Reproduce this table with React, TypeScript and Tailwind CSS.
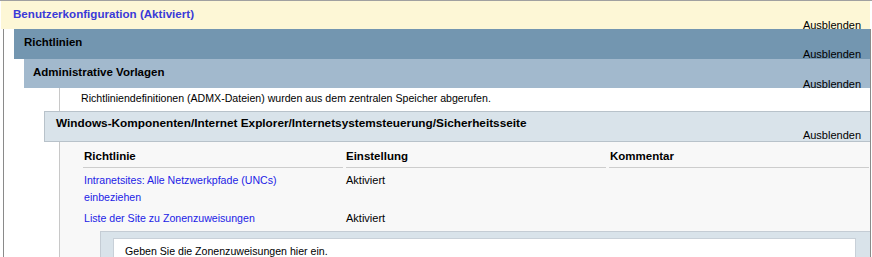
import React from "react";

function Hide({ last }: { last?: boolean }) {
  return (
    <div className={last ? "mt-auto text-right pr-[9px] leading-[10px] text-[11px] font-normal text-black" : "mt-auto text-right pr-[9px] pb-[1px] leading-[10px] text-[11px] font-normal text-black"}>
      Ausblenden
    </div>
  );
}

export default function App() {
  return (
    <div className="w-[872px] h-[257px] overflow-hidden bg-white font-['Liberation_Sans',Arial,sans-serif] text-[10.6px] text-black">
      <div className="border-t border-[#a0a0a0]">
        {/* Section header */}
        <div className="ml-[1px] w-[869px] h-[28px] bg-[#fdf7d6] flex flex-col">
          <div className="pt-[6px] pl-[12px] font-bold text-[11.6px] leading-[13px] text-[#3a3ad8]">
            Benutzerkonfiguration (Aktiviert)
          </div>
          <Hide last />
        </div>

        <div className="ml-[3px] w-[868px] h-[300px] border-l border-r border-[#8a8a8a] pl-[10px]">
          {/* Richtlinien */}
          <div className="h-[30px] bg-[#7396b0] flex flex-col">
            <div className="pt-[7px] pl-[10px] font-bold text-[11.4px] leading-[13px]">Richtlinien</div>
            <Hide />
          </div>

          <div className="pl-[10px]">
            {/* Administrative Vorlagen */}
            <div className="h-[29px] bg-[#a2b9cd] flex flex-col">
              <div className="pt-[7px] pl-[9px] font-bold text-[11.5px] leading-[13px]">Administrative Vorlagen</div>
              <Hide />
            </div>

            <div className="pl-[20px]">
              <div className="ml-[15px] border-l border-[#c8c8c8] h-[23px] pl-[21px] pt-[4px] leading-[13px]">
                Richtliniendefinitionen (ADMX-Dateien) wurden aus dem zentralen Speicher abgerufen.
              </div>

              {/* Windows-Komponenten band */}
              <div className="h-[31px] bg-[#d9e3ea] border-l border-t border-b border-[#b8c2ca] flex flex-col">
                <div className="pt-[5px] pl-[11px] font-bold text-[11.8px] leading-[13px]">
                  Windows-Komponenten/Internet Explorer/Internetsystemsteuerung/Sicherheitsseite
                </div>
                <Hide />
              </div>

              {/* Policy table */}
              <div className="ml-[15px] border-l border-[#c8c8c8] bg-[#f8f8f8] h-[200px]">
                <div className="pl-[23px]">
                  <div className="grid grid-cols-[260px_260px_260px] gap-x-[3px] pt-[6px]">
                    <div className="pl-[1px] pb-[2px] border-b border-[#cdcdcd] font-bold text-[11.5px] leading-[17px]">Richtlinie</div>
                    <div className="pb-[2px] border-b border-[#cdcdcd] font-bold text-[11.5px] leading-[17px]">Einstellung</div>
                    <div className="pl-[1px] pb-[2px] border-b border-[#cdcdcd] font-bold text-[11.5px] leading-[17px]">Kommentar</div>
                  </div>
                  <div className="grid grid-cols-[260px_260px_260px] gap-x-[3px] pt-[2px] pb-[2px] leading-[17px]">
                    <div className="pl-[1px] py-[2px] text-[#2222e6]">
                      Intranetsites: Alle Netzwerkpfade (UNCs)
                      <br />
                      einbeziehen
                    </div>
                    <div className="py-[2px] text-[11px]">Aktiviert</div>
                    <div className="py-[2px]"></div>
                    <div className="pl-[1px] py-[2px] text-[#2222e6]">Liste der Site zu Zonenzuweisungen</div>
                    <div className="py-[2px] text-[11px]">Aktiviert</div>
                    <div className="py-[2px]"></div>
                  </div>
                </div>

                {/* Zone assignment box */}
                <div className="ml-[40px] border-t border-l border-[#c4ccd4] bg-[#d9e3ea] pt-[6px] pl-[12px] pr-[14px] h-[60px]">
                  <div className="bg-white border border-[#c8d0d8] h-[40px] pl-[11px] pt-[6px] leading-[13px]">
                    Geben Sie die Zonenzuweisungen hier ein.
                  </div>
                </div>
              </div>
            </div>
          </div>
        </div>
      </div>
    </div>
  );
}
